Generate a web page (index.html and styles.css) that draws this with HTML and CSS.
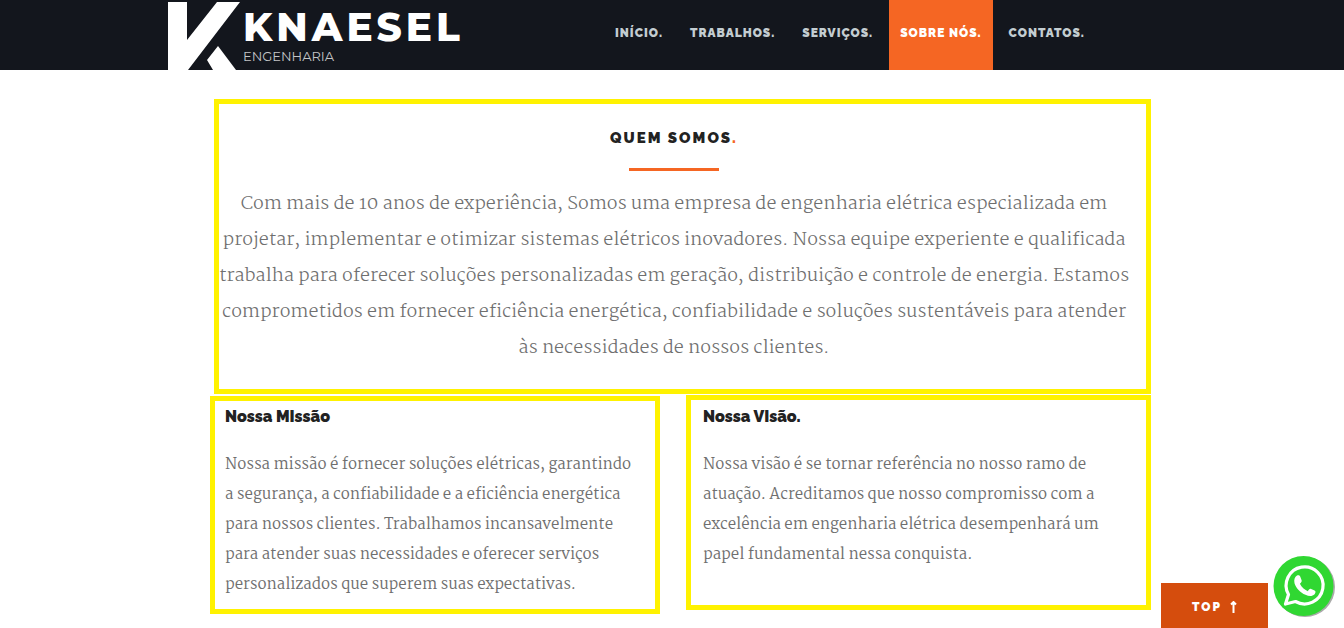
FILE: index.html
```html
<!DOCTYPE html>
<html lang="pt-BR">
<head>
<meta charset="utf-8">
<meta name="viewport" content="width=device-width, initial-scale=1">
<title>Knaesel Engenharia</title>
<link rel="stylesheet" href="styles.css">
</head>
<body>
<header class="site-header">
  <a class="logo" href="#" aria-label="Knaesel Engenharia">
    <svg class="logo-mark" viewBox="0 0 72 70" aria-hidden="true">
      <path d="M0 2H19V40L49 2H72L20 70H0ZM50 46L68 70H45L39 60Z" fill="#fff"/>
    </svg>
    <span class="logo-words">
      <span class="logo-name">KNAESEL</span>
      <span class="logo-sub">ENGENHARIA</span>
    </span>
  </a>
  <nav class="nav">
    <a href="#">INÍCIO.</a>
    <a href="#">TRABALHOS.</a>
    <a href="#">SERVIÇOS.</a>
    <a class="active" href="#">SOBRE NÓS.</a>
    <a href="#">CONTATOS.</a>
  </nav>
</header>
<main class="about">
  <section class="intro">
    <h2 class="title">QUEM SOMOS<span class="dot">.</span></h2>
    <div class="rule"></div>
    <p class="lead">Com mais de 10 anos de experiência, Somos uma empresa de engenharia elétrica especializada em<br>
    projetar, implementar e otimizar sistemas elétricos inovadores. Nossa equipe experiente e qualificada<br>
    trabalha para oferecer soluções personalizadas em geração, distribuição e controle de energia. Estamos<br>
    comprometidos em fornecer eficiência energética, confiabilidade e soluções sustentáveis para atender<br>
    às necessidades de nossos clientes.</p>
    <div class="frame frame-intro"></div>
  </section>
  <div class="columns">
    <section class="column">
      <h3 class="subtitle">Nossa MIssão</h3>
      <p class="text">Nossa missão é fornecer soluções elétricas, garantindo<br>
      a segurança, a confiabilidade e a eficiência energética<br>
      para nossos clientes. Trabalhamos incansavelmente<br>
      para atender suas necessidades e oferecer serviços<br>
      personalizados que superem suas expectativas.</p>
      <div class="frame frame-mission"></div>
    </section>
    <section class="column">
      <h3 class="subtitle">Nossa VIsão.</h3>
      <p class="text">Nossa visão é se tornar referência no nosso ramo de<br>
      atuação. Acreditamos que nosso compromisso com a<br>
      excelência em engenharia elétrica desempenhará um<br>
      papel fundamental nessa conquista.</p>
      <div class="frame frame-vision"></div>
    </section>
  </div>
</main>
<div class="floating">
  <button class="top-button" type="button">TOP
    <svg width="7" height="12" viewBox="0 0 7 12" aria-hidden="true"><path d="M3.500 12V1M1 3.500L3.500 1L6 3.500" fill="none" stroke="#fff" stroke-width="2"/></svg>
  </button>
  <a class="whatsapp" href="#" aria-label="WhatsApp">
    <svg width="62" height="62" viewBox="0 0 62 62" aria-hidden="true">
      <circle cx="32" cy="31" r="30" fill="#a9aaa9"/>
      <circle cx="30.500" cy="30" r="30" fill="#30d732"/>
      <path d="M12.500 48L15.500 38.500A18.500 18.500 0 1 1 22.500 45.500Z" fill="none" stroke="#fff" stroke-width="3.200" stroke-linejoin="round"/>
      <path d="M24 19.500C25.500 18.800 26.600 19.300 27.200 20.600L28.600 24.200C29 25.300 28.500 26 26.900 27.800C28.800 31.400 31.300 33.700 34.800 35.200C36.300 33.300 36.900 32.500 38.200 33L41.600 34.600C43 35.300 42.700 36.800 41.600 38.200C39.300 40.500 36.200 40.500 32.500 38.800C27.300 36.600 22.900 32.100 21.500 27.200C20.700 23.900 21.800 20.700 24 19.500Z" fill="#fff"/>
    </svg>
  </a>
</div>
</body>
</html>
```
FILE: styles.css
```css
* { box-sizing: border-box; }
body {
  margin: 0;
  background: #fff;
  color: #6f6f6f;
  font-family: Martel, Merriweather, "Liberation Serif", serif;
}
h2, h3, p { margin: 0; }
a { color: inherit; text-decoration: none; }

.site-header {
  display: flex;
  gap: 131px;
  height: 70px;
  padding-left: 12.5%;
  background: #13161d;
}
.logo { display: flex; gap: 3px; width: 305px; }
.logo-mark { flex: none; width: 72px; height: 70px; }
.logo-words { display: flex; flex-direction: column; padding-top: 7px; }
.logo-name {
  color: #fff;
  font: 800 39px/40px Montserrat, "DejaVu Sans", sans-serif;
  letter-spacing: 4px;
}
.logo-sub { color: #c4c5c7; font: 400 13px/18px Montserrat, Inter, sans-serif; }

.nav { display: flex; gap: 5px; }
.nav a {
  padding: 0 11px;
  color: #c3cdd1;
  font: 900 12px/67px Raleway, Inter, sans-serif;
  letter-spacing: 1px;
  white-space: nowrap;
}
.nav .active { background: #f56623; color: #fff; }

.about { max-width: 960px; margin: 29px auto 0; padding-left: 4px; }
.intro {
  position: relative;
  display: flex;
  flex-direction: column;
  align-items: center;
  padding: 27px 0 28px;
}
.title {
  color: #222;
  font: 900 15px/24px Raleway, Inter, sans-serif;
  letter-spacing: 2px;
}
.dot { color: #f56623; }
.rule { width: 90px; height: 3px; margin: 18px 0 15px; background: #f56623; }
.lead { font-size: 18px; font-weight: 300; line-height: 36px; text-align: center; white-space: nowrap; }

.columns { display: grid; grid-template-columns: 1fr 1fr; }
.column { position: relative; padding: 11px 0 14px 29px; }
.subtitle {
  margin-bottom: 21px;
  color: #222;
  font: 900 16px/24px Raleway, Lato, sans-serif;
}
.text { font-size: 15px; line-height: 30px; white-space: nowrap; }

.frame { position: absolute; border: 5px solid #fff200; pointer-events: none; }
.frame-intro { inset: 0 1px 0 18px; }
.frame-mission { inset: 2px 14px 0 14px; }
.frame-vision { inset: 1px 1px 4px 12px; }

.floating {
  position: fixed;
  right: 9px;
  bottom: 0;
  display: flex;
  align-items: flex-end;
  gap: 5px;
}
.top-button {
  display: flex;
  align-items: center;
  justify-content: center;
  gap: 8px;
  width: 107px;
  height: 45px;
  padding: 2px 0 0;
  border: 0;
  background: #d54d0d;
  color: #fff;
  font: 900 12px/16px Raleway, "Open Sans", sans-serif;
  letter-spacing: 2px;
}
.whatsapp { display: flex; margin-bottom: 10px; }
```
